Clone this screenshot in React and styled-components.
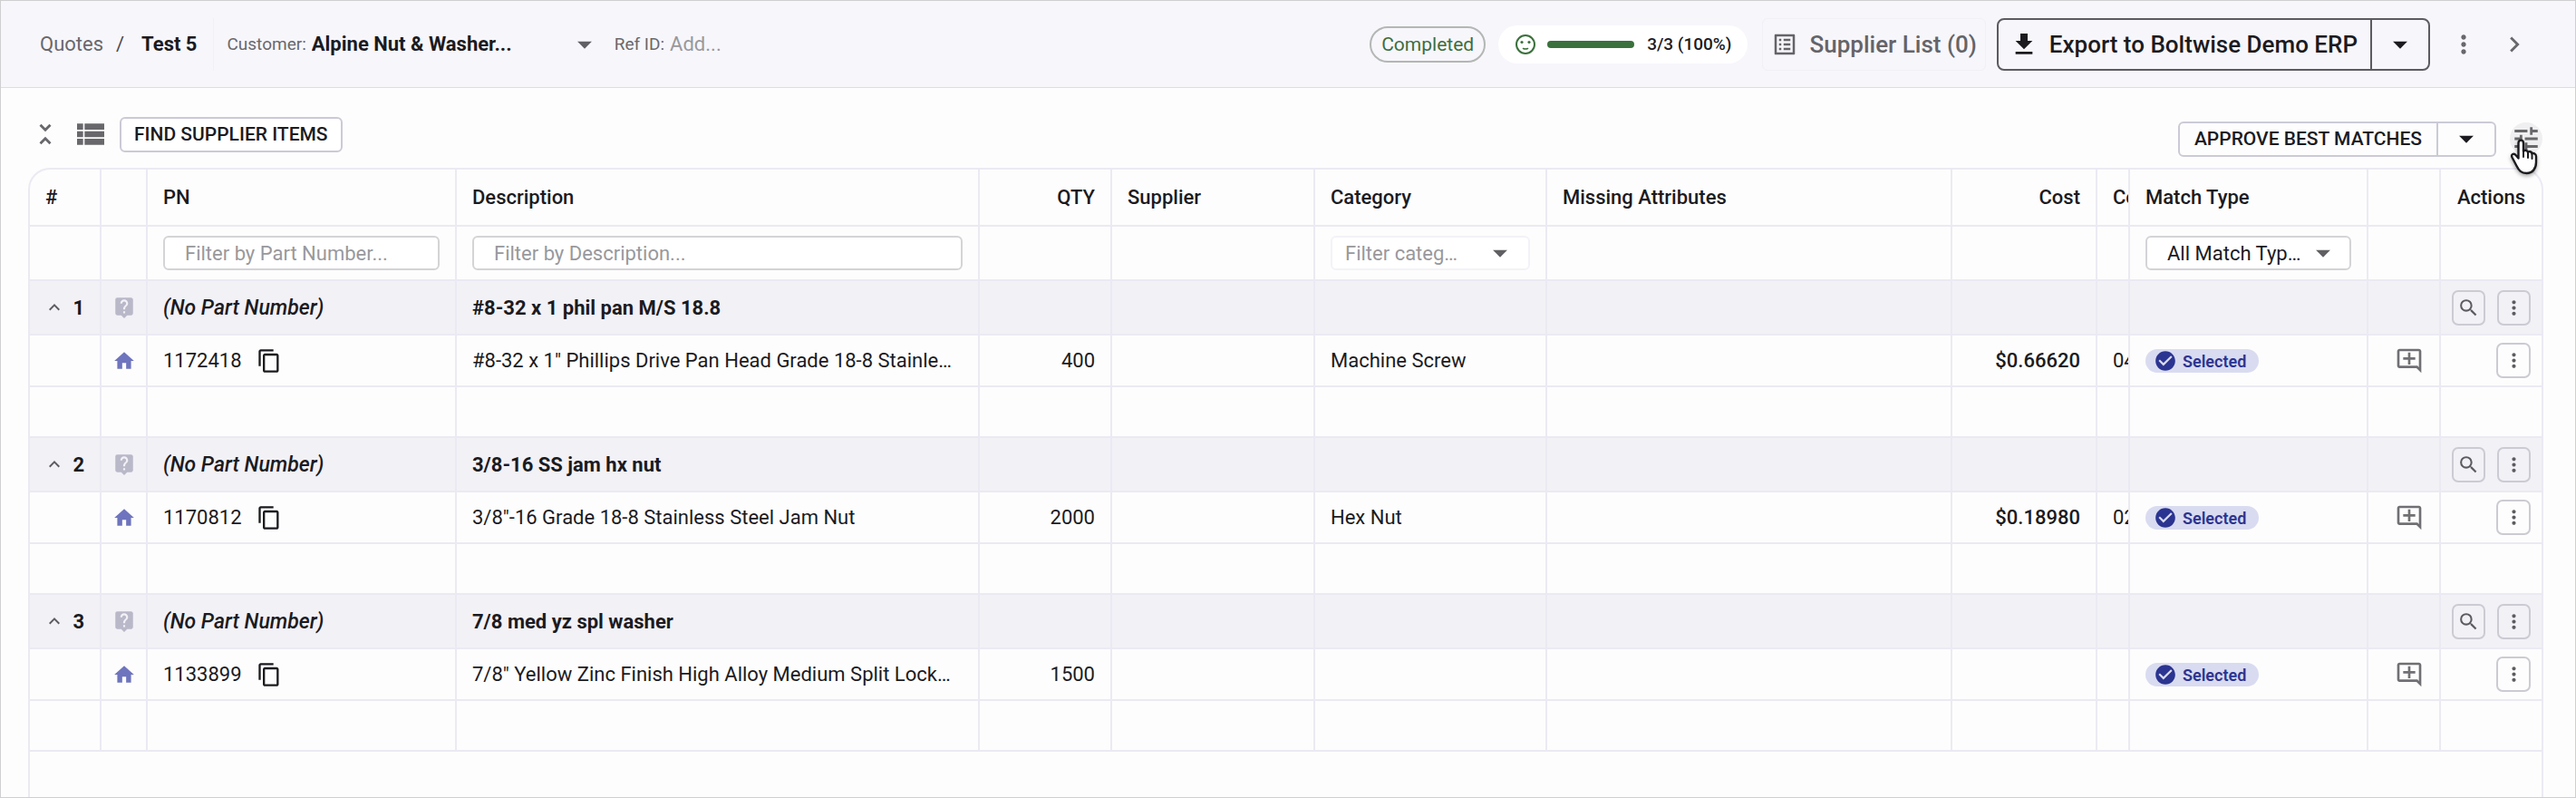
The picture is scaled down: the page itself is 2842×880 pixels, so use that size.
import React from 'react';
import styled, { createGlobalStyle, css } from 'styled-components';
import {
  MdUnfoldLess, MdViewList, MdListAlt, MdDownload, MdMoreVert, MdChevronRight, MdTune,
  MdExpandLess, MdLiveHelp, MdHome, MdContentCopy, MdSearch, MdArrowDropDown,
  MdCheckCircle, MdOutlineAddComment,
} from 'react-icons/md';

const line = '#ebeaf3';
const ink = '#1b1b1f';
const muted = '#68686c';

const GlobalStyle = createGlobalStyle`
  *, *::before, *::after { box-sizing: border-box; }
  body { margin: 0; background: #fdfdfd; }
  body, button, input, select { font-family: Roboto, sans-serif; color: ${ink}; }
  svg { display: block; flex: none; }
`;

const Page = styled.div`
  min-height: 100vh;
  display: flex;
  flex-direction: column;
  border: 1px solid #cfcfd2;
`;

const Header = styled.header`
  display: flex;
  align-items: center;
  justify-content: space-between;
  height: 96px;
  padding: 0 49px 0 43px;
  background: #f7f6fb;
  border-bottom: 1px solid #dddce6;
`;

const HeaderSide = styled.div`
  display: flex;
  align-items: center;
`;

const Crumbs = styled.nav`
  display: flex;
  align-items: center;
  gap: 14px;
  height: 58px;
  padding-right: 18px;
  border-right: 1px solid #f1f0f6;
  font-size: 22px;
  color: #4b4b50;
`;

const CrumbLink = styled.a`
  color: ${muted};
  text-decoration: none;
`;

const CrumbCurrent = styled.span`
  padding-left: 5px;
  font-weight: 700;
  color: ${ink};
`;

const FieldLabel = styled.label`
  padding-left: 14px;
  font-size: 19px;
  color: ${muted};
`;

const SelectWrap = styled.span`
  position: relative;
  display: flex;
  align-items: center;
  svg {
    position: absolute;
    right: ${(p) => p.$inset || 0}px;
    pointer-events: none;
    color: #606064;
  }
`;

const CustomerSelect = styled.select`
  appearance: none;
  width: 320px;
  padding: 0 80px 0 0;
  margin-left: 6px;
  border: 0;
  background: transparent;
  font-size: 22px;
  font-weight: 700;
  text-overflow: ellipsis;
`;

const RefInput = styled.input`
  width: 160px;
  margin-left: 6px;
  padding: 0;
  border: 0;
  background: transparent;
  font-size: 22px;
  &::placeholder { color: #98989c; opacity: 1; }
`;

const StatusChip = styled.span`
  display: flex;
  align-items: center;
  height: 40px;
  margin-right: 14px;
  padding: 0 11px;
  border: 2px solid #b3b7b4;
  border-radius: 20px;
  font-size: 21px;
  color: #3c6e3f;
`;

const ProgressPill = styled.div`
  display: flex;
  align-items: center;
  height: 42px;
  margin-right: 16px;
  padding: 0 18px;
  border-radius: 21px;
  background: #fff;
  font-size: 19px;
  font-weight: 500;
  svg { color: #3a713c; }
`;

const ProgressTrack = styled.div`
  width: 96px;
  height: 8px;
  margin: 0 14px 0 12px;
  border-radius: 4px;
  background: #d7e3d7;
  overflow: hidden;
`;

const ProgressFill = styled.div`
  height: 100%;
  background: #3a713c;
`;

const SupplierButton = styled.button`
  display: flex;
  align-items: center;
  gap: 12px;
  height: 58px;
  margin-right: 12px;
  padding: 0 9px;
  border: 1px solid #f1f0f7;
  border-radius: 6px;
  background: transparent;
  font-size: 26px;
  font-weight: 500;
  color: #646468;
`;

const Split = styled.div`
  display: flex;
  height: ${(p) => (p.$large ? 58 : 39)}px;
  border: 2px solid ${(p) => (p.$large ? '#5c5c60' : '#cbcad6')};
  border-radius: ${(p) => (p.$large ? 8 : 6)}px;
  font-size: ${(p) => (p.$large ? 26 : 21)}px;
`;

const SplitMain = styled.button`
  display: flex;
  align-items: center;
  gap: 12px;
  padding: ${(p) => (p.$icon ? '0 14px 0 12px' : '0 16px')};
  border: 0;
  background: transparent;
  font-size: inherit;
  font-weight: 500;
`;

const SplitCaret = styled.button`
  display: flex;
  align-items: center;
  justify-content: center;
  width: 64px;
  padding: 0;
  border: 0;
  border-left: 2px solid ${(p) => (p.$dark ? '#5c5c60' : '#cbcad6')};
  background: transparent;
`;

const IconButton = styled.button`
  display: flex;
  align-items: center;
  justify-content: center;
  width: 36px;
  height: 36px;
  padding: 0;
  border: 0;
  border-radius: 50%;
  background: ${(p) => (p.$hover ? '#efeff1' : 'transparent')};
  color: ${muted};
`;

const Toolbar = styled.div`
  display: flex;
  justify-content: space-between;
  align-items: center;
  height: 88px;
  padding: 24px 36px 0 31px;
`;

const ToolGroup = styled.div`
  display: flex;
  align-items: center;
  gap: ${(p) => p.$gap}px;
  padding: ${(p) => p.$pad};
`;

const FindButton = styled.button`
  height: 39px;
  padding: 0 14px;
  border: 2px solid #cbcad6;
  border-radius: 6px;
  background: #fff;
  font-size: 21px;
  font-weight: 500;
`;

const CursorSpot = styled.span`
  position: relative;
  display: flex;
`;

const Cursor = styled.svg`
  position: absolute;
  left: 0;
  top: 18px;
  filter: drop-shadow(0 2px 2px rgba(0, 0, 0, 0.35));
`;

const GridPanel = styled.main`
  flex: 1;
  margin: 0 35px 0 30px;
  border: 2px solid ${line};
  border-bottom: 0;
  border-radius: 24px 24px 0 0;
`;

const Table = styled.table`
  width: 100%;
  table-layout: fixed;
  border-collapse: separate;
  border-spacing: 0;
  font-size: 22px;
`;

const cell = css`
  padding: 0 17px;
  border-bottom: 2px solid ${line};
  border-right: 2px solid ${line};
  text-align: ${(p) => p.$align || 'left'};
  white-space: nowrap;
  overflow: hidden;
  &:last-child { border-right: 0; }
`;

const Th = styled.th`
  ${cell}
  height: 63px;
  font-weight: 500;
  ${(p) => p.$clip && 'text-overflow: clip; padding-right: 0;'}
`;

const Td = styled.td`
  ${cell}
  height: ${(p) => p.$h}px;
  text-overflow: ellipsis;
  font-weight: ${(p) => p.$weight || 400};
  background: ${(p) => (p.$group ? '#f2f1f6' : 'transparent')};
  ${(p) => p.$clip && 'text-overflow: clip; padding-right: 0;'}
  ${(p) => p.$tight && 'padding-left: 12px; padding-right: 12px;'}
`;

const NoPart = styled.em`
  font-size: 23px;
  font-weight: 500;
`;

const FilterInput = styled.input`
  display: block;
  width: 100%;
  height: 38px;
  padding: 0 22px;
  border: 2px solid #d4d4d7;
  border-radius: 6px;
  background: #fff;
  font-size: 22px;
  &::placeholder { color: #98989c; opacity: 1; }
`;

const FilterSelect = styled.select`
  appearance: none;
  width: 100%;
  height: 38px;
  padding: 0 ${(p) => (p.$faint ? 64 : 48)}px 0 ${(p) => (p.$faint ? 14 : 22)}px;
  border: 2px solid ${(p) => (p.$faint ? '#f3f2f8' : '#d4d4d7')};
  border-radius: 6px;
  background: #fff;
  font-size: 22px;
  color: ${(p) => (p.$faint ? '#98989c' : ink)};
  text-overflow: ellipsis;
`;

const Inline = styled.div`
  display: flex;
  align-items: center;
  justify-content: ${(p) => p.$justify || 'flex-start'};
  gap: ${(p) => p.$gap || 0}px;
`;

const PlainButton = styled.button`
  display: flex;
  padding: 0;
  border: 0;
  background: transparent;
  color: ${(p) => p.$color || ink};
`;

const RowButton = styled.button`
  display: flex;
  align-items: center;
  justify-content: center;
  width: 38px;
  height: 39px;
  padding: 0;
  border: 2px solid #cccbd3;
  border-radius: 7px;
  background: transparent;
  color: #5c5c60;
`;

const SelectedChip = styled.span`
  display: inline-flex;
  align-items: center;
  gap: 6px;
  height: 26px;
  padding: 0 14px 0 9px;
  border-radius: 13px;
  background: #d9dbf1;
  font-size: 18px;
  font-weight: 600;
  color: #2b3490;
  vertical-align: middle;
`;

const groups = [
  { n: 1, title: '#8-32 x 1 phil pan M/S 18.8', pn: '1172418', desc: '#8-32 x 1" Phillips Drive Pan Head Grade 18-8 Stainle…', qty: '400', category: 'Machine Screw', cost: '$0.66620', next: '04' },
  { n: 2, title: '3/8-16 SS jam hx nut', pn: '1170812', desc: '3/8"-16 Grade 18-8 Stainless Steel Jam Nut', qty: '2000', category: 'Hex Nut', cost: '$0.18980', next: '02' },
  { n: 3, title: '7/8 med yz spl washer', pn: '1133899', desc: '7/8" Yellow Zinc Finish High Alloy Medium Split Lock…', qty: '1500', category: '', cost: '', next: '' },
];

const columns = [79, 51, 341, 577, 146, 224, 256, null, 160, 36, 263, 80, 111];

function Smiley() {
  return (
    <svg width="24" height="24" viewBox="0 0 24 24" fill="none" stroke="currentColor" strokeLinecap="round" aria-hidden="true">
      <circle cx="12" cy="12" r="10" strokeWidth="2" />
      <circle cx="8" cy="9.500" r="1.600" fill="currentColor" stroke="none" />
      <circle cx="16" cy="9.500" r="1.600" fill="currentColor" stroke="none" />
      <path d="M9.500 16.500q2.500 1 5 0" strokeWidth="1.600" />
    </svg>
  );
}

function Blank({ count, h, group }) {
  return Array.from({ length: count }, (_, i) => <Td key={i} $h={h} $group={group} />);
}

function ItemGroup({ g }) {
  return (
    <tbody>
      <tr>
        <Td $h={60} $group $weight={700}>
          <Inline $gap={8} $justify="flex-end">
            <PlainButton aria-label="Collapse" $color="#5c5c60"><MdExpandLess size={24} /></PlainButton>
            {g.n}
          </Inline>
        </Td>
        <Td $h={60} $group $tight><Inline $justify="center"><MdLiveHelp size={26} color="#b9b8c9" /></Inline></Td>
        <Td $h={60} $group><NoPart>(No Part Number)</NoPart></Td>
        <Td $h={60} $group $weight={700}>{g.title}</Td>
        <Blank count={8} h={60} group />
        <Td $h={60} $group $tight>
          <Inline $gap={13} $justify="flex-end">
            <RowButton aria-label="Search"><MdSearch size={25} /></RowButton>
            <RowButton aria-label="More"><MdMoreVert size={25} /></RowButton>
          </Inline>
        </Td>
      </tr>
      <tr>
        <Td $h={57} />
        <Td $h={57} $tight><Inline $justify="center"><MdHome size={26} color="#6e74bd" /></Inline></Td>
        <Td $h={57}>
          <Inline $gap={16}>
            {g.pn}
            <PlainButton aria-label="Copy part number"><MdContentCopy size={28} /></PlainButton>
          </Inline>
        </Td>
        <Td $h={57}>{g.desc}</Td>
        <Td $h={57} $align="right">{g.qty}</Td>
        <Td $h={57} />
        <Td $h={57}>{g.category}</Td>
        <Td $h={57} />
        <Td $h={57} $weight={500} $align="right">{g.cost}</Td>
        <Td $h={57} $clip>{g.next}</Td>
        <Td $h={57}><SelectedChip><MdCheckCircle size={26} />Selected</SelectedChip></Td>
        <Td $h={57}>
          <Inline $justify="flex-end"><PlainButton aria-label="Add comment" $color="#707074"><MdOutlineAddComment size={32} /></PlainButton></Inline>
        </Td>
        <Td $h={57} $tight>
          <Inline $justify="flex-end"><RowButton aria-label="More"><MdMoreVert size={25} /></RowButton></Inline>
        </Td>
      </tr>
      <tr><Blank count={13} h={56} /></tr>
    </tbody>
  );
}

export default function App() {
  return (
    <>
      <GlobalStyle />
      <Page>
        <Header>
          <HeaderSide>
            <Crumbs>
              <CrumbLink href="#quotes">Quotes</CrumbLink>
              <span>/</span>
              <CrumbCurrent>Test 5</CrumbCurrent>
            </Crumbs>
            <FieldLabel htmlFor="customer">Customer:</FieldLabel>
            <SelectWrap>
              <CustomerSelect id="customer"><option>Alpine Nut &amp; Washer...</option></CustomerSelect>
              <MdArrowDropDown size={38} />
            </SelectWrap>
            <FieldLabel htmlFor="ref">Ref ID:</FieldLabel>
            <RefInput id="ref" placeholder="Add..." />
          </HeaderSide>
          <HeaderSide>
            <StatusChip>Completed</StatusChip>
            <ProgressPill>
              <Smiley />
              <ProgressTrack><ProgressFill style={{ width: '100%' }} /></ProgressTrack>
              3/3 (100%)
            </ProgressPill>
            <SupplierButton><MdListAlt size={30} />Supplier List (0)</SupplierButton>
            <Split $large>
              <SplitMain $icon><MdDownload size={32} />Export to Boltwise Demo ERP</SplitMain>
              <SplitCaret $dark aria-label="Export options"><MdArrowDropDown size={38} /></SplitCaret>
            </Split>
            <ToolGroup $gap={20} $pad="0 0 0 19px">
              <IconButton aria-label="More"><MdMoreVert size={32} /></IconButton>
              <IconButton aria-label="Next"><MdChevronRight size={34} /></IconButton>
            </ToolGroup>
          </HeaderSide>
        </Header>
        <Toolbar>
          <ToolGroup $gap={14} $pad="0 0 10px 0">
            <IconButton aria-label="Collapse all"><MdUnfoldLess size={34} /></IconButton>
            <IconButton aria-label="List view"><MdViewList size={40} /></IconButton>
            <FindButton>FIND SUPPLIER ITEMS</FindButton>
          </ToolGroup>
          <ToolGroup $gap={15} $pad="0">
            <Split>
              <SplitMain>APPROVE BEST MATCHES</SplitMain>
              <SplitCaret aria-label="Approve options"><MdArrowDropDown size={38} /></SplitCaret>
            </Split>
            <CursorSpot>
              <IconButton $hover aria-label="Table settings"><MdTune size={34} /></IconButton>
              <Cursor width="34" height="42" viewBox="0 0 34 42" aria-hidden="true">
                <path d="M9.500 5c0-4.500 5.500-4.500 5.500 0v9c1-2 4.500-1.500 5 1 1-1.500 4-1 4.500 1.500 1-1 4.500-.5 4.500 3v6.500c0 7-4 12-10.500 12-6 0-8.500-3-11-8l-5-9.500c-1.500-3.500 2-5 4-2.500l3 3.500z" fill="#fff" stroke="#1b1b1f" strokeWidth="2.400" strokeLinejoin="round" />
                <path d="M15 13v7M20 15v6M24.500 17v5" fill="none" stroke="#1b1b1f" strokeWidth="2" strokeLinecap="round" />
              </Cursor>
            </CursorSpot>
          </ToolGroup>
        </Toolbar>
        <GridPanel>
          <Table>
            <colgroup>{columns.map((w, i) => <col key={i} width={w || undefined} />)}</colgroup>
            <thead>
              <tr>
                <Th>#</Th>
                <Th />
                <Th>PN</Th>
                <Th>Description</Th>
                <Th $align="right">QTY</Th>
                <Th>Supplier</Th>
                <Th>Category</Th>
                <Th>Missing Attributes</Th>
                <Th $align="right">Cost</Th>
                <Th $clip>Co</Th>
                <Th>Match Type</Th>
                <Th />
                <Th $align="center">Actions</Th>
              </tr>
              <tr>
                <Blank count={2} h={60} />
                <Td $h={60}><FilterInput aria-label="Filter by part number" placeholder="Filter by Part Number..." /></Td>
                <Td $h={60}><FilterInput aria-label="Filter by description" placeholder="Filter by Description..." /></Td>
                <Blank count={2} h={60} />
                <Td $h={60}>
                  <SelectWrap $inset={14}>
                    <FilterSelect $faint aria-label="Filter category"><option>Filter categ…</option></FilterSelect>
                    <MdArrowDropDown size={38} />
                  </SelectWrap>
                </Td>
                <Blank count={3} h={60} />
                <Td $h={60}>
                  <SelectWrap $inset={12}>
                    <FilterSelect aria-label="Match type"><option>All Match Typ…</option></FilterSelect>
                    <MdArrowDropDown size={38} />
                  </SelectWrap>
                </Td>
                <Blank count={2} h={60} />
              </tr>
            </thead>
            {groups.map((g) => <ItemGroup key={g.n} g={g} />)}
          </Table>
        </GridPanel>
      </Page>
    </>
  );
}
